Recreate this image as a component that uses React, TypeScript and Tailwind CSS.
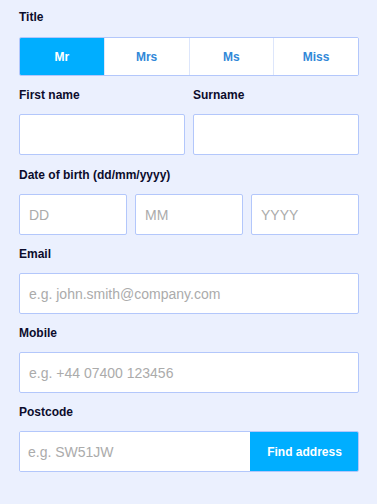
import { useState } from "react";

const titles = ["Mr", "Mrs", "Ms", "Miss"];

const inputCls =
  "h-[41px] w-full min-w-0 rounded-[2px] border border-[#b3c7fb] bg-white px-[9px] text-[14px] text-[#1a1a2e] outline-none placeholder:text-[#ababab]";

function Label({ children, className = "" }: { children: React.ReactNode; className?: string }) {
  return (
    <div className={`text-[12px] font-bold leading-[18px] text-[#0c0c2c] ${className}`}>{children}</div>
  );
}

export default function App() {
  const [title, setTitle] = useState("Mr");

  return (
    <div
      className="min-h-[504px] w-full bg-[#ebf0fe] pl-[19px] pr-[18px] pt-[8px] pb-6"
      style={{ fontFamily: '"Liberation Sans", Arial, sans-serif' }}
    >
      {/* Title */}
      <Label className="mb-[11px]">Title</Label>
      <div className="flex h-[39px] overflow-hidden rounded-[2px] border border-[#b3c7fb] bg-white">
        {titles.map((t, i) => (
          <button
            key={t}
            type="button"
            onClick={() => setTitle(t)}
            className={`flex-1 text-[12px] font-bold ${i > 0 ? "border-l border-[#dde6fb]" : ""} ${
              title === t ? "bg-[#00aeff] text-white" : "bg-white text-[#3188d8]"
            }`}
          >
            {t}
          </button>
        ))}
      </div>

      {/* Names */}
      <div className="mt-[10px] mb-[11px] grid grid-cols-2 gap-[8px]">
        <div>
          <Label className="mb-[10px]">First name</Label>
          <input className={inputCls} />
        </div>
        <div>
          <Label className="mb-[10px]">Surname</Label>
          <input className={inputCls} />
        </div>
      </div>

      {/* DOB */}
      <Label className="mb-[10px]">Date of birth (dd/mm/yyyy)</Label>
      <div className="mb-[10px] grid grid-cols-3 gap-[8px]">
        <input className={inputCls} placeholder="DD" />
        <input className={inputCls} placeholder="MM" />
        <input className={inputCls} placeholder="YYYY" />
      </div>

      <Label className="mb-[10px]">Email</Label>
      <input className={`${inputCls} mb-[10px]`} placeholder="e.g. john.smith@company.com" />

      <Label className="mb-[10px]">Mobile</Label>
      <input className={`${inputCls} mb-[10px]`} placeholder="e.g. +44 07400 123456" />

      <Label className="mb-[10px]">Postcode</Label>
      <div className="flex h-[41px] overflow-hidden rounded-[2px] border border-[#b3c7fb] bg-white">
        <input
          className="h-full min-w-0 flex-1 bg-white px-[8px] text-[14px] text-[#1a1a2e] outline-none placeholder:text-[#ababab]"
          placeholder="e.g. SW51JW"
        />
        <button type="button" className="-my-px -mr-px w-[109px] bg-[#00aeff] text-[12px] font-bold text-white">
          Find address
        </button>
      </div>
    </div>
  );
}
